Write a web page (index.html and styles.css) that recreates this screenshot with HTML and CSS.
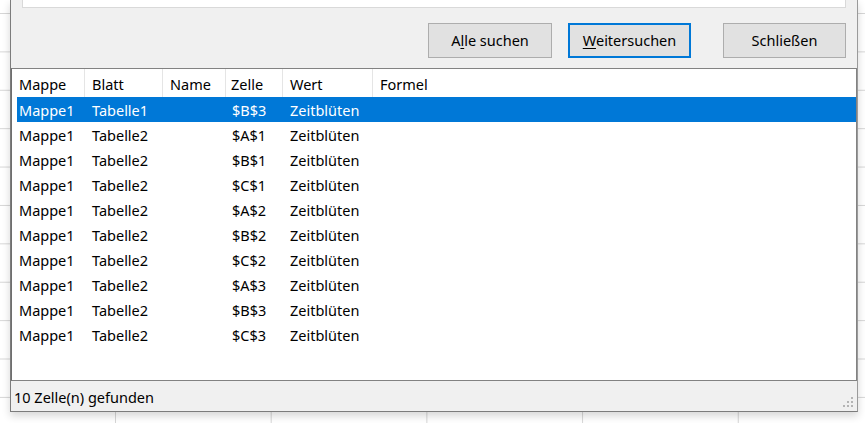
FILE: index.html
```html
<!DOCTYPE html>
<html lang="de">
<head>
<meta charset="utf-8">
<title>Suchergebnisse</title>
<link rel="stylesheet" href="styles.css">
</head>
<body>
<div class="dialog">
  <div class="search-input"></div>
  <div class="buttons">
    <button class="btn">A<u>l</u>le suchen</button>
    <button class="btn btn-default"><u>W</u>eitersuchen</button>
    <button class="btn btn-close">Schließen</button>
  </div>
  <div class="list">
    <div class="list-head">
      <div class="hcell first">Mappe</div>
      <div class="hcell">Blatt</div>
      <div class="hcell">Name</div>
      <div class="hcell zelle">Zelle</div>
      <div class="hcell">Wert</div>
      <div class="hcell">Formel</div>
    </div>
    <div class="rows">
      <div class="row selected"><span class="c first">Mappe1</span><span class="c">Tabelle1</span><span class="c"></span><span class="c zelle">$B$3</span><span class="c">Zeitblüten</span><span class="c"></span></div>
      <div class="row"><span class="c first">Mappe1</span><span class="c">Tabelle2</span><span class="c"></span><span class="c zelle">$A$1</span><span class="c">Zeitblüten</span><span class="c"></span></div>
      <div class="row"><span class="c first">Mappe1</span><span class="c">Tabelle2</span><span class="c"></span><span class="c zelle">$B$1</span><span class="c">Zeitblüten</span><span class="c"></span></div>
      <div class="row"><span class="c first">Mappe1</span><span class="c">Tabelle2</span><span class="c"></span><span class="c zelle">$C$1</span><span class="c">Zeitblüten</span><span class="c"></span></div>
      <div class="row"><span class="c first">Mappe1</span><span class="c">Tabelle2</span><span class="c"></span><span class="c zelle">$A$2</span><span class="c">Zeitblüten</span><span class="c"></span></div>
      <div class="row"><span class="c first">Mappe1</span><span class="c">Tabelle2</span><span class="c"></span><span class="c zelle">$B$2</span><span class="c">Zeitblüten</span><span class="c"></span></div>
      <div class="row"><span class="c first">Mappe1</span><span class="c">Tabelle2</span><span class="c"></span><span class="c zelle">$C$2</span><span class="c">Zeitblüten</span><span class="c"></span></div>
      <div class="row"><span class="c first">Mappe1</span><span class="c">Tabelle2</span><span class="c"></span><span class="c zelle">$A$3</span><span class="c">Zeitblüten</span><span class="c"></span></div>
      <div class="row"><span class="c first">Mappe1</span><span class="c">Tabelle2</span><span class="c"></span><span class="c zelle">$B$3</span><span class="c">Zeitblüten</span><span class="c"></span></div>
      <div class="row"><span class="c first">Mappe1</span><span class="c">Tabelle2</span><span class="c"></span><span class="c zelle">$C$3</span><span class="c">Zeitblüten</span><span class="c"></span></div>
    </div>
  </div>
  <div class="status">
    <span class="status-text">10 Zelle(n) gefunden</span>
    <svg class="grip" width="12" height="12" viewBox="0 0 12 12" aria-hidden="true">
      <rect x="9" y="0" width="2" height="2" fill="#b4b4b4"/>
      <rect x="5" y="4" width="2" height="2" fill="#b4b4b4"/>
      <rect x="9" y="4" width="2" height="2" fill="#b4b4b4"/>
      <rect x="1" y="8" width="2" height="2" fill="#b4b4b4"/>
      <rect x="5" y="8" width="2" height="2" fill="#b4b4b4"/>
      <rect x="9" y="8" width="2" height="2" fill="#b4b4b4"/>
    </svg>
  </div>
</div>
</body>
</html>
```
FILE: styles.css
```css
* { box-sizing: border-box; }

html, body {
  margin: 0;
  padding: 0;
  width: 865px;
  height: 423px;
  overflow: hidden;
}

body {
  font-family: "Noto Sans", "Open Sans", sans-serif;
  font-size: 14.5px;
  color: #000;
  background-color: #fff;
  background-image:
    linear-gradient(to right, #d6d6d6 1px, transparent 1px),
    linear-gradient(to bottom, #d6d6d6 1px, transparent 1px);
  background-size: 155.7px 100%, 100% 38.4px;
  background-position: 115px 0, 0 13px;
}

.dialog {
  margin-left: 10px;
  width: 848px;
  height: 412px;
  background: #f0f0f0;
  border-left: 1px solid #7c7c7c;
  border-right: 1px solid #9a9a9a;
  border-bottom: 1px solid #7c7c7c;
  box-shadow: 0 4px 8px rgba(0, 0, 0, 0.16);
  display: flex;
  flex-direction: column;
  position: relative;
}

.search-input {
  height: 8px;
  margin: 0 11px 0 11px;
  background: #fff;
  border: 1px solid #d9d9d9;
  border-top: none;
}

.buttons {
  display: flex;
  justify-content: flex-end;
  margin-top: 15px;
  padding-right: 11px;
  height: 35px;
}

.btn {
  width: 124px;
  height: 35px;
  margin: 0;
  padding: 0 0 1px;
  font-family: inherit;
  font-size: 14.5px;
  color: #000;
  background: #e1e1e1;
  border: 1px solid #adadad;
}

.btn u { text-decoration-thickness: 1px; text-underline-offset: 2px; }

.btn + .btn { margin-left: 16px; }

.btn-default {
  width: 123px;
  border: 2px solid #0078d7;
}

.btn.btn-close {
  width: 123px;
  margin-left: 32px;
}

.list {
  margin-top: 10px;
  height: 313px;
  background: #fff;
  border: 1px solid #828282;
  border-left-color: #6e6e6e;
  padding-left: 5px;
}

.list-head, .row {
  display: grid;
  grid-template-columns: 68px 78px 63px 57px 90px 1fr;
}

.list-head {
  height: 28px;
  margin-left: -5px;
  padding-left: 5px;
}

.hcell {
  display: flex;
  align-items: center;
  padding-left: 7px;
  padding-top: 1px;
  border-right: 1px solid #e5e5e5;
  white-space: nowrap;
}

.hcell:last-child { border-right: none; }
.hcell.first { padding-left: 2px; }
.hcell.zelle { padding-left: 5px; }

.row {
  height: 25px;
  align-items: center;
}

.row .c {
  padding-left: 7px;
  padding-top: 1px;
  white-space: nowrap;
}

.row .c.first { padding-left: 2px; }
.row .c.zelle { padding-left: 6px; }

.row.selected {
  background: #0078d7;
  color: #fff;
}

.status {
  flex: 1;
  display: flex;
  align-items: center;
  padding-left: 3px;
  padding-top: 1px;
  position: relative;
}

.grip {
  position: absolute;
  right: 3px;
  bottom: 2px;
}
```
